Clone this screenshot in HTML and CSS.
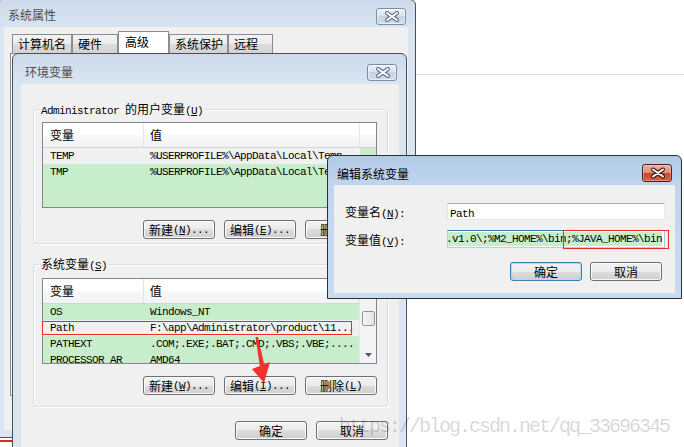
FILE: index.html
```html
<!DOCTYPE html>
<html lang="zh-CN">
  <head>
    <meta charset="UTF-8" />
    <meta name="viewport" content="width=device-width, initial-scale=1.0" />
    <title>编辑系统变量</title>
    <link rel="stylesheet" href="styles.css">
  </head>
  <body>
    <div class="desk">
      <div class="bg-line"></div>
      <div class="bg-red"></div>

      <!-- 系统属性 -->
      <div class="win win-sys">
        <div class="titlebar">
          <span class="title">系统属性</span>
          <div class="close">
            <svg width="30" height="15" viewBox="0 0 30 15"><path d="M10 4 L20 11 M20 4 L10 11" stroke="#5e6f85" stroke-width="4" stroke-linecap="round"/><path d="M10 4 L20 11 M20 4 L10 11" stroke="#fff" stroke-width="2" stroke-linecap="round"/></svg>
          </div>
        </div>
        <div class="client sys-client">
          <div class="tabs">
            <div class="tab w1">计算机名</div>
            <div class="tab w2">硬件</div>
            <div class="tab w3 selected">高级</div>
            <div class="tab w4">系统保护</div>
            <div class="tab w5">远程</div>
          </div>
          <div class="tabpanel"></div>
        </div>
      </div>

      <div class="white-patch"></div>

      <!-- 环境变量 -->
      <div class="win win-env">
        <div class="titlebar">
          <span class="title">环境变量</span>
          <div class="close">
            <svg width="30" height="15" viewBox="0 0 30 15"><path d="M10 4 L20 11 M20 4 L10 11" stroke="#5e6f85" stroke-width="4" stroke-linecap="round"/><path d="M10 4 L20 11 M20 4 L10 11" stroke="#fff" stroke-width="2" stroke-linecap="round"/></svg>
          </div>
        </div>
        <div class="client env-client">
          <fieldset class="group g-user">
            <legend><span class="mono">Administrator </span>的用户变量<span class="mono">(<u>U</u>)</span></legend>
            <div class="list">
              <div class="lv">
                <div class="lv-head"><div class="c1">变量</div><div class="c2">值</div></div>
                <div class="row sel"><div class="c1">TEMP</div><div class="c2">%USERPROFILE%\AppData\Local\Temp</div></div>
                <div class="row"><div class="c1">TMP</div><div class="c2">%USERPROFILE%\AppData\Local\Temp</div></div>
              </div>
            </div>
            <div class="btns">
              <div class="btn">新建<span class="mono">(<u>N</u>)...</span></div>
              <div class="btn">编辑<span class="mono">(<u>E</u>)...</span></div>
              <div class="btn">删除<span class="mono">(<u>D</u>)</span></div>
            </div>
          </fieldset>

          <fieldset class="group g-sys">
            <legend>系统变量<span class="mono">(<u>S</u>)</span></legend>
            <div class="list">
              <div class="lv">
                <div class="lv-head"><div class="c1">变量</div><div class="c2">值</div></div>
                <div class="row"><div class="c1">OS</div><div class="c2">Windows_NT</div></div>
                <div class="row sel"><div class="c1">Path</div><div class="c2">F:\app\Administrator\product\11...</div></div>
                <div class="row"><div class="c1">PATHEXT</div><div class="c2">.COM;.EXE;.BAT;.CMD;.VBS;.VBE;....</div></div>
                <div class="row"><div class="c1">PROCESSOR_AR</div><div class="c2">AMD64</div></div>
              </div>
              <div class="sb">
                <div class="sb-up"></div>
                <div class="sb-thumb"></div>
                <div class="sb-track"></div>
                <div class="sb-down">
                  <svg width="7" height="4" viewBox="0 0 7 4"><polygon points="0,0 7,0 3.5,4" fill="#4d5b70"/></svg>
                </div>
              </div>
            </div>
            <div class="btns">
              <div class="btn">新建<span class="mono">(<u>W</u>)...</span></div>
              <div class="btn">编辑<span class="mono">(<u>I</u>)...</span></div>
              <div class="btn">删除<span class="mono">(<u>L</u>)</span></div>
            </div>
          </fieldset>

          <div class="btns bottom">
            <div class="btn">确定</div>
            <div class="btn">取消</div>
          </div>
        </div>
      </div>

      <!-- 编辑系统变量 -->
      <div class="win win-edit">
        <div class="titlebar">
          <span class="title">编辑系统变量</span>
          <div class="close">
            <svg width="30" height="16" viewBox="0 0 30 16"><path d="M10 4.5 L20 11.5 M20 4.5 L10 11.5" stroke="#3a1a12" stroke-width="4" stroke-linecap="round"/><path d="M10 4.5 L20 11.5 M20 4.5 L10 11.5" stroke="#fff" stroke-width="2" stroke-linecap="round"/></svg>
          </div>
        </div>
        <div class="client edit-client">
          <div class="form">
            <div class="lbl">变量名<span class="mono">(<u>N</u>):</span></div>
            <div class="field f-name"><span class="mono">Path</span></div>
            <div class="lbl">变量值<span class="mono">(<u>V</u>):</span></div>
            <div class="field f-value focus"><span class="mono hl">.v1.0\;%M2_HOME%\bin;%JAVA_HOME%\bin</span></div>
          </div>
          <div class="btns edit-btns">
            <div class="btn default">确定</div>
            <div class="btn">取消</div>
          </div>
        </div>
      </div>

      <!-- annotations -->
      <div class="mark mark-path"></div>
      <div class="mark mark-java"></div>
      <svg class="arrow" width="24" height="50" viewBox="0 0 24 50">
        <polygon points="5.5,2 8,2 14.5,31 10,32" fill="#f2312c"/>
        <polygon points="2,34 20,27 14,48" fill="#f2312c"/>
      </svg>
      <div class="watermark">https://blog.csdn.net/qq_33696345</div>
    </div>
  </body>
</html>
```

FILE: styles.css
```css
body {
  margin: 0;
  background-color: #fff;
  font-family: "Noto Sans CJK SC", sans-serif;
  font-size: 12px;
  color: #000;
}
.desk {
  position: relative;
  width: 684px;
  height: 447px;
  overflow: hidden;
}
.bg-line {
  position: absolute;
  left: 416px;
  right: 0;
  top: 74px;
  height: 1px;
  background-color: #dcdcdc;
}
.bg-red {
  position: absolute;
  left: 0;
  top: 440px;
  width: 14px;
  height: 2px;
  background-color: #d42a2a;
}
.white-patch {
  position: absolute;
  left: 407px;
  top: 155px;
  right: 0;
  bottom: 0;
  background-color: #fff;
}
.mono {
  font-family: "Liberation Mono", "Noto Sans CJK SC", monospace;
  font-size: 11px;
  letter-spacing: -0.6px;
}

/* windows */
.win {
  position: absolute;
  box-sizing: border-box;
  display: flex;
  flex-direction: column;
  border: 1px solid #4f4f4f;
  border-radius: 6px 6px 0 0;
  background: linear-gradient(#cbdaeb, #dae5f2 30px, #dbe6f3);
}
.titlebar {
  flex: none;
  display: flex;
  justify-content: space-between;
  align-items: flex-start;
}
.title {
  line-height: 16px;
  color: #4d4d4d;
}
.close {
  box-sizing: border-box;
  width: 30px;
  height: 17px;
  border: 1px solid #7f8fa3;
  border-radius: 3px;
  background: linear-gradient(#eaf0f7, #d8e2ed 50%, #c6d3e2 50%, #d0dbe8);
  box-shadow: inset 0 0 0 1px rgba(255, 255, 255, 0.5);
}
.close svg {
  display: block;
}
.client {
  flex: 1;
  background-color: #f0f0f0;
}

.win-sys {
  left: -4px;
  top: -1px;
  width: 420px;
  height: 439px;
  padding: 0 7px 7px 7px;
}
.win-sys .titlebar {
  height: 27px;
}
.win-sys .title {
  padding: 7px 0 0 4px;
}
.win-sys .close {
  margin-top: 8px;
  margin-right: 2px;
}
.sys-client {
  padding: 5px 0 0 6px;
}
.tabs {
  display: flex;
  align-items: flex-end;
  height: 21px;
  padding-left: 2px;
}
.tab {
  box-sizing: border-box;
  height: 19px;
  border: 1px solid #898c95;
  border-bottom: none;
  padding-left: 5px;
  line-height: 18px;
  background: linear-gradient(#f3f3f3, #ebebeb 50%, #dddddd 50%, #d2d2d2);
}
.tab.selected {
  height: 22px;
  padding-left: 6px;
  line-height: 20px;
  background: #fff;
}
.w1 { width: 60px; }
.w2 { width: 46px; }
.w3 { width: 51px; }
.w4 { width: 59px; }
.w5 { width: 45px; }
.tabpanel {
  box-sizing: border-box;
  width: 392px;
  height: 343px;
  border: 1px solid #898c95;
  background-color: #fafafa;
}

.win-env {
  left: 12px;
  top: 53px;
  width: 395px;
  height: 420px;
  padding: 0 7px 0 8px;
}
.win-env .titlebar {
  height: 30px;
}
.win-env .title {
  padding: 10px 0 0 4px;
}
.win-env .close {
  margin-top: 10px;
  margin-right: 2px;
}
.env-client {
  padding: 17px 11px 0 12px;
}
.group {
  box-sizing: border-box;
  width: 355px;
  margin: 0;
  border: 1px solid #d5dfe5;
  border-radius: 3px;
  box-shadow: inset 1px 1px 0 #fff, 1px 1px 0 #fff;
  padding: 5px 10px 4px 8px;
}
.group legend {
  box-sizing: border-box;
  height: 16px;
  margin-left: -3px;
  padding: 0 2px;
  line-height: 16px;
  overflow: visible;
}
.group legend .mono {
  line-height: 12px;
}
.g-sys {
  margin-top: 12px;
  padding: 6px 10px 11px 8px;
}
.list {
  box-sizing: border-box;
  display: flex;
  width: 335px;
  height: 86px;
  border: 1px solid #828790;
  background-color: #c7edcc;
  overflow: hidden;
}
.lv {
  flex: 1;
  min-width: 0;
}
.lv-head {
  box-sizing: border-box;
  display: flex;
  height: 25px;
  border-bottom: 1px solid #d5d5d5;
  background: linear-gradient(#ffffff, #ffffff 50%, #f7f8fa 51%, #f1f2f4);
  line-height: 24px;
}
.c1,
.c2 {
  box-sizing: border-box;
  white-space: nowrap;
  overflow: hidden;
}
.c1 {
  width: 100px;
  padding-left: 7px;
}
.c2 {
  width: 216px;
  padding-left: 6px;
}
.lv-head .c1,
.lv-head .c2 {
  border-right: 1px solid #e3e5e8;
}
.lv-head .c1 {
  width: 101px;
}
.row {
  display: flex;
  width: 317px;
  height: 16px;
  line-height: 16px;
  font-family: "Liberation Mono", monospace;
  font-size: 11px;
  letter-spacing: -0.6px;
}
.row .c1 {
  width: 101px;
}
.row.sel {
  background-color: #f0f0f0;
}
.sb {
  box-sizing: border-box;
  width: 17px;
  display: flex;
  flex-direction: column;
  background-color: #f3f3f3;
  border-left: 1px solid #e6e6e6;
}
.sb-up {
  height: 32px;
}
.sb-thumb {
  height: 15px;
  margin: 0 1px 0 2px;
  box-sizing: border-box;
  border: 1px solid #979797;
  border-radius: 2px;
  background: linear-gradient(90deg, #f4f4f4, #e4e4e4);
}
.sb-track {
  flex: 1;
}
.sb-down {
  height: 17px;
  display: flex;
  justify-content: center;
  align-items: center;
}
.sb-down svg {
  display: block;
}
.btns {
  display: flex;
  justify-content: flex-end;
  gap: 9px;
  margin-top: 12px;
}
.btn {
  box-sizing: border-box;
  width: 72px;
  height: 19px;
  display: flex;
  justify-content: center;
  align-items: center;
  border: 1px solid #707070;
  border-radius: 3px;
  background: linear-gradient(#f2f2f2, #ebebeb 50%, #dddddd 50%, #cfcfcf);
  box-shadow: inset 0 0 0 1px #fbfbfb;
  white-space: nowrap;
}
.btns.bottom {
  margin-top: 14px;
}

.win-edit {
  left: 327px;
  top: 155px;
  width: 355px;
  height: 144px;
  padding: 0 6px 5px 6px;
  border-color: #2f2f2f;
  background: linear-gradient(#b1cae6, #c1d6ee 30px, #c8dbf0);
}
.win-edit .titlebar {
  height: 29px;
}
.win-edit .title {
  padding: 10px 0 0 3px;
  color: #000;
}
.win-edit .close {
  margin-top: 8px;
  margin-right: 3px;
  height: 18px;
  border-color: #4a2219;
  background: linear-gradient(#ebb2a4, #db8f7b 48%, #c8452c 52%, #d5624a);
  box-shadow: inset 0 0 0 1px rgba(255, 220, 210, 0.4);
}
.edit-client {
  padding: 18px 10px 0 11px;
}
.form {
  display: grid;
  grid-template-columns: 102px 218px;
  row-gap: 10px;
  align-items: center;
}
.field {
  box-sizing: border-box;
  height: 17px;
  border: 1px solid;
  border-color: #abadb3 #e3e9ef #e3e9ef #e2e3ea;
  background-color: #fff;
  white-space: nowrap;
  overflow: hidden;
  line-height: 15px;
}
.f-name {
  padding-left: 2px;
}
.f-value {
  height: 18px;
  display: flex;
  justify-content: flex-end;
  align-items: center;
  padding-right: 2px;
}
.field.focus {
  border-color: #3d7bad #a4c9e3 #b5cfe7 #b5cfe7;
}
.hl {
  flex: none;
  background-color: #c7edcc;
  line-height: 14px;
}
.edit-btns {
  margin-top: 14px;
  padding-right: 3px;
  gap: 8px;
}
.btn.default {
  border-color: #3c7fb1;
  box-shadow: inset 0 0 0 1px #a6def7;
}

/* annotations */
.mark {
  position: absolute;
  box-sizing: border-box;
  border: 1px solid #ec2b2b;
}
.mark-path {
  left: 42px;
  top: 321px;
  width: 310px;
  height: 14px;
}
.mark-java {
  left: 563px;
  top: 230px;
  width: 106px;
  height: 19px;
}
.arrow {
  position: absolute;
  left: 250px;
  top: 335px;
}
.watermark {
  position: absolute;
  left: 339px;
  top: 416px;
  font-family: "Liberation Mono", monospace;
  font-size: 20px;
  letter-spacing: -2px;
  line-height: 22px;
  color: rgba(0, 0, 0, 0.17);
  white-space: nowrap;
}
```
